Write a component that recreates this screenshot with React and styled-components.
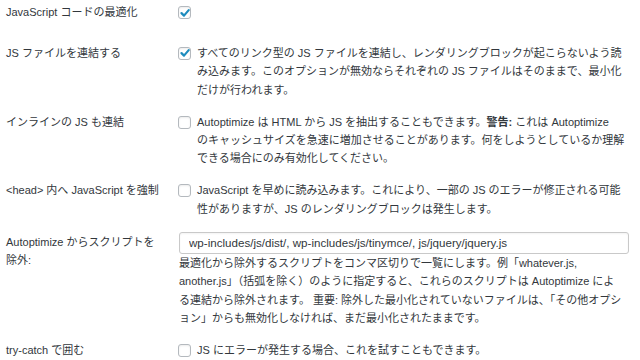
import React from 'react'
import styled, { createGlobalStyle } from 'styled-components'

const GlobalStyle = createGlobalStyle`
  html, body {
    margin: 0;
    padding: 0;
    background: #fff;
  }
  body {
    font-family: "Liberation Sans", "Noto Sans CJK JP", sans-serif;
    font-size: 11px;
    color: #32373c;
  }
`

const Table = styled.div`
  display: flex;
  flex-direction: column;
  width: 640px;
`

const Row = styled.div`
  display: grid;
  grid-template-columns: 178px 1fr;
  padding: ${({ $first }) => ($first ? '3px 0 15.5px' : '6.8px 0')};
  line-height: 18.4px;
`

const Label = styled.div`
  padding-left: 6px;
  padding-top: ${({ $top }) => $top || 0}px;
`

const Cell = styled.div`
  padding-right: 8px;
`

const Option = styled.label`
  display: flex;
  align-items: flex-start;
`

const Box = styled.span`
  flex: none;
  box-sizing: border-box;
  width: 13px;
  height: 13px;
  margin: 3px 6px 0 0;
  border: 1px solid #b4b9be;
  border-radius: 3px;
  background: #fff;
  box-shadow: inset 0 1px 2px rgba(0, 0, 0, 0.08);
  display: flex;
  align-items: center;
  justify-content: center;

  svg {
    display: block;
  }
`

const Text = styled.span`
  white-space: nowrap;

  b {
    font-weight: bold;
  }
`

const Input = styled.input`
  display: block;
  box-sizing: border-box;
  width: 450px;
  height: 22px;
  margin: 0 0 0 1px;
  padding: 0 9px;
  border: 1px solid #c9c9c9;
  border-radius: 3px;
  background: #fff;
  box-shadow: inset 0 1px 2px rgba(0, 0, 0, 0.05);
  font-family: "Liberation Sans", "Noto Sans CJK JP", sans-serif;
  font-size: 11.6px;
  color: #32373c;
  outline: none;
`

const Description = styled.p`
  margin: 0 0 0 1px;
  white-space: nowrap;
`

const Check = () => (
  <svg width="10" height="10" viewBox="0 0 10 10">
    <path d="M1.5 5.1 L4 7.6 L8.7 2.1" fill="none" stroke="#1e8cbe" strokeWidth="2.2" strokeLinecap="round" strokeLinejoin="round" />
  </svg>
)

const Checkbox = ({ checked }) => <Box>{checked && <Check />}</Box>

export default function App() {
  return (
    <>
      <GlobalStyle />
      <Table>
        <Row $first>
          <Label>JavaScript コードの最適化</Label>
          <Cell>
            <Option>
              <Checkbox checked />
            </Option>
          </Cell>
        </Row>

        <Row>
          <Label>JS ファイルを連結する</Label>
          <Cell>
            <Option>
              <Checkbox checked />
              <Text>
                すべてのリンク型の JS ファイルを連結し、レンダリングブロックが起こらないよう読<br />
                み込みます。このオプションが無効ならそれぞれの JS ファイルはそのままで、最小化<br />
                だけが行われます。
              </Text>
            </Option>
          </Cell>
        </Row>

        <Row>
          <Label>インラインの JS も連結</Label>
          <Cell>
            <Option>
              <Checkbox />
              <Text>
                Autoptimize は HTML から JS を抽出することもできます。<b>警告:</b> これは Autoptimize<br />
                のキャッシュサイズを急速に増加させることがあります。何をしようとしているか理解<br />
                できる場合にのみ有効化してください。
              </Text>
            </Option>
          </Cell>
        </Row>

        <Row>
          <Label>&lt;head&gt; 内へ JavaScript を強制</Label>
          <Cell>
            <Option>
              <Checkbox />
              <Text>
                JavaScript を早めに読み込みます。これにより、一部の JS のエラーが修正される可能<br />
                性がありますが、JS のレンダリングブロックは発生します。
              </Text>
            </Option>
          </Cell>
        </Row>

        <Row>
          <Label $top={1}>
            Autoptimize からスクリプトを<br />
            除外:
          </Label>
          <Cell>
            <Input
              type="text"
              readOnly
              value="wp-includes/js/dist/, wp-includes/js/tinymce/, js/jquery/jquery.js"
            />
            <Description>
              最適化から除外するスクリプトをコンマ区切りで一覧にします。例「whatever.js,<br />
              another.js」（括弧を除く）のように指定すると、これらのスクリプトは Autoptimize によ<br />
              る連結から除外されます。 重要: 除外した最小化されていないファイルは、「その他オプシ<br />
              ョン」からも無効化しなければ、まだ最小化されたままです。
            </Description>
          </Cell>
        </Row>

        <Row>
          <Label>try-catch で囲む</Label>
          <Cell>
            <Option>
              <Checkbox />
              <Text>JS にエラーが発生する場合、これを試すこともできます。</Text>
            </Option>
          </Cell>
        </Row>
      </Table>
    </>
  )
}
